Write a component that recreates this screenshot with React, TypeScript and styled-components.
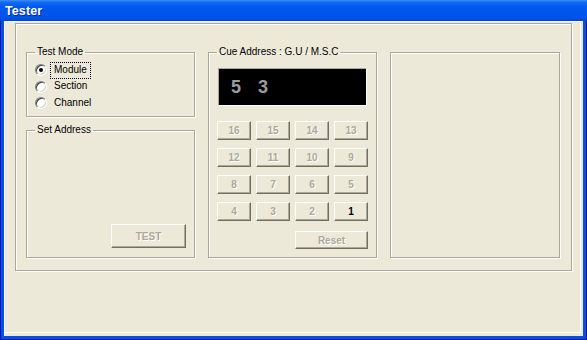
import React from "react";
import styled, { createGlobalStyle } from "styled-components";

const Global = createGlobalStyle`
  html, body { margin: 0; padding: 0; background: #ece9d8; }
  #root { width: 587px; height: 340px; }
  * { box-sizing: border-box; }
`;

const FONT = `"Liberation Sans", Arial, sans-serif`;

const Window = styled.div`
  width: 587px;
  height: 340px;
  display: flex;
  flex-direction: column;
  background: #0a4ee4;
  box-shadow: inset 1px 0 0 #0019a8, inset -1px 0 0 #001a9c, inset 0 -1px 0 #001a9c;
  font-family: ${FONT};
  font-size: 10px;
  color: #000;
`;

const TitleBar = styled.div`
  height: 21px;
  flex: none;
  display: flex;
  align-items: center;
  padding: 1px 0 0 5px;
  background: linear-gradient(
    to bottom,
    #3a8cf7 0%,
    #1169f0 12%,
    #0058ee 35%,
    #0055eb 70%,
    #0050e2 90%,
    #0044cc 100%
  );
`;

const Title = styled.span`
  font-family: ${FONT};
  font-weight: bold;
  font-size: 12.5px;
  color: #fff;
  text-shadow: 1px 1px 0 #0b2a8a;
  letter-spacing: 0.1px;
`;

const Body = styled.div`
  flex: 1;
  display: flex;
  padding: 0 4px 4px 4px;
`;

const Client = styled.div`
  flex: 1;
  display: flex;
  flex-direction: column;
  background: #ece9d8;
  box-shadow: inset 1px 1px 0 #f6f4ec;
`;

const Inner = styled.div`
  flex: 1;
  margin: 0 2px 3px 0;
  padding: 2px 0 0 11px;
  border-right: 1px solid #ffffff;
  border-bottom: 1px solid #ffffff;
`;

const Frame = styled.div`
  width: 557px;
  height: 248px;
  border: 1px solid #aca899;
  box-shadow: inset 1px 1px 0 #fff, 1px 1px 0 #fff;
  padding: 22px 0 0 10px;
  display: flex;
  gap: 13px;
  align-items: flex-start;
`;

const Column = styled.div`
  display: flex;
  flex-direction: column;
  gap: 7px;
  width: 169px;
`;

const Group = styled.fieldset<{ $h: number; $w?: number; $top?: number }>`
  margin: ${(p) => p.$top ?? 0}px 0 0 0;
  padding: 0;
  min-width: 0;
  width: ${(p) => p.$w ?? 169}px;
  height: ${(p) => p.$h}px;
  border: 1px solid #aca899;
  box-shadow: inset 1px 1px 0 #fff, 1px 1px 0 #fff;
`;

const Legend = styled.legend`
  margin-left: 8px;
  padding: 0 2px;
  font-family: ${FONT};
  font-size: 10px;
  line-height: 12px;
  color: #000;
`;

const RadioList = styled.div`
  display: flex;
  flex-direction: column;
  gap: 0.5px;
  padding: 4px 0 0 8px;
`;

const RadioRow = styled.label`
  height: 16px;
  display: flex;
  align-items: center;
`;

const RadioDot = styled.span<{ $checked?: boolean }>`
  position: relative;
  width: 12px;
  height: 12px;
  border-radius: 50%;
  background: #fff;
  border: 1px solid;
  border-color: #808080 #ffffff #ffffff #808080;
  box-shadow: inset 1px 1px 0 #404040, inset -1px -1px 0 #d4d0c8;
  flex: none;
  &::after {
    content: "";
    display: ${(p) => (p.$checked ? "block" : "none")};
    position: absolute;
    left: 3px;
    top: 3px;
    width: 4px;
    height: 4px;
    border-radius: 50%;
    background: #000;
  }
`;

const RadioLabel = styled.span<{ $focus?: boolean }>`
  margin-left: 3px;
  padding: 1px 3px 2px 3px;
  border: 1px dotted ${(p) => (p.$focus ? "#000" : "transparent")};
  line-height: 12px;
  font-size: 10px;
`;

const SetBody = styled.div`
  height: 120px;
  display: flex;
  align-items: flex-end;
  justify-content: flex-end;
  padding: 0 8px 8px 0;
`;

const CueBody = styled.div`
  display: flex;
  flex-direction: column;
  padding: 10px 0 0 8px;
`;

const Lcd = styled.div`
  margin-left: 1px;
  width: 149px;
  height: 38px;
  background: #000;
  border: 1px solid;
  border-color: #aca899 #fff #fff #aca899;
  display: flex;
  align-items: center;
  padding-left: 12px;
  font-family: ${FONT};
  font-weight: bold;
  font-size: 18px;
  letter-spacing: 6px;
  color: #9c9c9c;
`;

const Keypad = styled.div`
  margin-top: 15px;
  display: grid;
  grid-template-columns: repeat(4, 34px);
  grid-auto-rows: 19px;
  column-gap: 5px;
  row-gap: 8px;
`;

const Btn = styled.button<{ $enabled?: boolean; $h?: number }>`
  margin: 0;
  padding: 0;
  height: ${(p) => p.$h ?? 19}px;
  background: #ece9d8;
  border: 1px solid;
  border-color: #ffffff #716f64 #716f64 #ffffff;
  box-shadow: inset -1px -1px 0 #aca899;
  font-family: ${FONT};
  font-weight: bold;
  font-size: 10px;
  color: ${(p) => (p.$enabled ? "#000" : "#aca899")};
  text-shadow: ${(p) => (p.$enabled ? "none" : "1px 1px 0 #fff")};
  display: flex;
  align-items: center;
  justify-content: center;
`;

const ResetBtn = styled(Btn)`
  grid-column: 3 / span 2;
  margin-top: 2px;
`;

const TestBtn = styled(Btn)`
  width: 75px;
`;

const keys = [16, 15, 14, 13, 12, 11, 10, 9, 8, 7, 6, 5, 4, 3, 2, 1];

export default function App() {
  return (
    <>
      <Global />
      <Window>
        <TitleBar>
          <Title>Tester</Title>
        </TitleBar>
        <Body>
          <Client>
            <Inner>
              <Frame>
                <Column>
                  <Group $h={71}>
                    <Legend>Test Mode</Legend>
                    <RadioList>
                      <RadioRow>
                        <RadioDot $checked />
                        <RadioLabel $focus>Module</RadioLabel>
                      </RadioRow>
                      <RadioRow>
                        <RadioDot />
                        <RadioLabel>Section</RadioLabel>
                      </RadioRow>
                      <RadioRow>
                        <RadioDot />
                        <RadioLabel>Channel</RadioLabel>
                      </RadioRow>
                    </RadioList>
                  </Group>
                  <Group $h={134}>
                    <Legend>Set Address</Legend>
                    <SetBody>
                      <TestBtn $h={24}>TEST</TestBtn>
                    </SetBody>
                  </Group>
                </Column>
                <Group $h={212}>
                  <Legend>Cue Address : G.U / M.S.C</Legend>
                  <CueBody>
                    <Lcd>5 3</Lcd>
                    <Keypad>
                      {keys.map((k) => (
                        <Btn key={k} $enabled={k === 1}>
                          {k}
                        </Btn>
                      ))}
                      <ResetBtn $h={18}>Reset</ResetBtn>
                    </Keypad>
                  </CueBody>
                </Group>
                <Group $h={206} $w={170} $top={6} />
              </Frame>
            </Inner>
          </Client>
        </Body>
      </Window>
    </>
  );
}
